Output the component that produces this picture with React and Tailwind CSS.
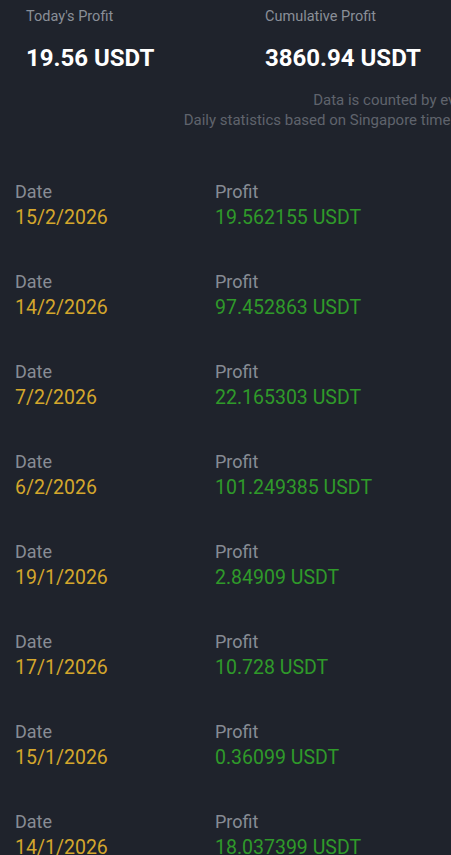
import React from 'react';

// Daily profit history panel (dark theme)

const rows = [
  { date: '15/2/2026', profit: '19.562155' },
  { date: '14/2/2026', profit: '97.452863' },
  { date: '7/2/2026', profit: '22.165303' },
  { date: '6/2/2026', profit: '101.249385' },
  { date: '19/1/2026', profit: '2.84909' },
  { date: '17/1/2026', profit: '10.728' },
  { date: '15/1/2026', profit: '0.36099' },
  { date: '14/1/2026', profit: '18.037399' },
];

export default function App() {
  return (
    <div
      className="min-h-screen w-full overflow-hidden bg-[#1f232c] text-white"
      style={{ fontFamily: 'Roboto, "Noto Sans", sans-serif' }}
    >
      {/* Summary */}
      <section className="pt-[7px] pl-[26px] grid grid-cols-[239px_1fr]">
        <div>
          <p className="text-[14.5px] leading-[20px] text-[#8a8f98]">Today's Profit</p>
          <p className="mt-[15px] text-[24px] leading-[32px] font-bold">19.56 USDT</p>
        </div>
        <div>
          <p className="text-[14.5px] leading-[20px] text-[#8a8f98]">Cumulative Profit</p>
          <p className="mt-[15px] text-[24px] leading-[32px] font-bold whitespace-nowrap">3860.94 USDT</p>
        </div>
      </section>

      <div className="mt-[16px] mr-[-55px] text-right text-[15px] leading-[20px] text-[#5f636c] whitespace-nowrap">
        <p>Data is counted by every day.</p>
        <p>Daily statistics based on Singapore time(UTC+8)</p>
      </div>

      {/* Daily list */}
      <ul className="mt-[50px] flex flex-col gap-[39px] pl-[15px]">
        {rows.map((r) => (
          <li key={r.date} className="grid grid-cols-[200px_1fr]">
            <div>
              <p className="text-[18px] leading-[24px] text-[#878c95]">Date</p>
              <p className="mt-[1px] text-[19.5px] leading-[26px] text-[#d4a72c]">{r.date}</p>
            </div>
            <div>
              <p className="text-[18px] leading-[24px] text-[#878c95]">Profit</p>
              <p className="mt-[1px] text-[19.5px] leading-[26px] text-[#2f9a2a]">{r.profit} USDT</p>
            </div>
          </li>
        ))}
      </ul>
    </div>
  );
}
